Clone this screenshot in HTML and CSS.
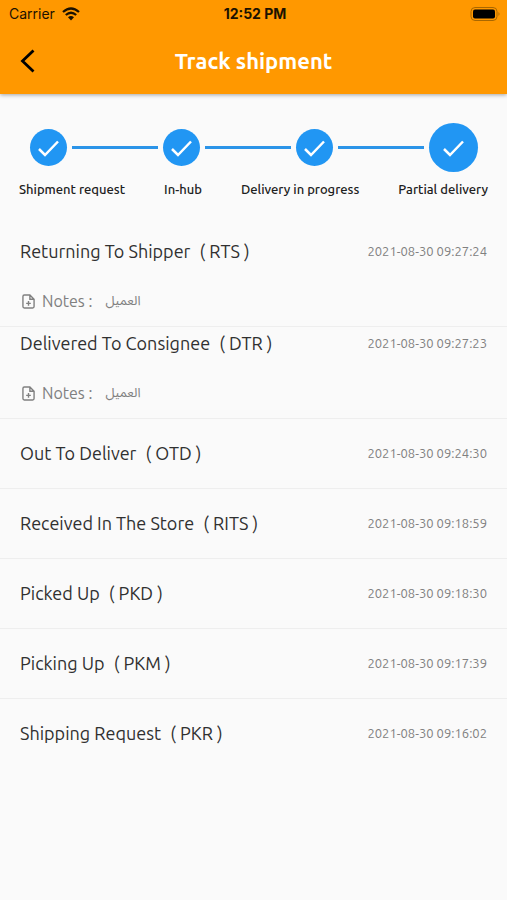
FILE: index.html
```html
<!DOCTYPE html>
<html lang="en">
<head>
<meta charset="utf-8">
<meta name="viewport" content="width=device-width, initial-scale=1">
<title>Track shipment</title>
<link rel="stylesheet" href="styles.css">
</head>
<body>
<svg class="defs" aria-hidden="true">
  <symbol id="check" viewBox="0 0 24 24"><path d="M2 13 8 19 21 5.500" fill="none" stroke="currentColor" stroke-width="2.500"/></symbol>
  <symbol id="note" viewBox="0 0 14 16"><path d="M8.500 1H2.500Q1 1 1 2.500V13.500Q1 15 2.500 15H11.500Q13 15 13 13.500V5.500ZM8.500 1V5.500H13M7 7.500V12.500M4.500 10H9.500" fill="none" stroke="currentColor" stroke-width="1.500"/></symbol>
</svg>
<header class="header">
  <div class="status">
    <div class="carrier">
      <span>Carrier</span>
      <svg class="wifi" viewBox="0 0 18 14" aria-label="Wi-Fi"><path d="M1 5Q9-2 17 5M3.800 8Q9 3.500 14.200 8" fill="none" stroke="#1c1200" stroke-width="2.300"/><path d="M6 10.200Q9 7.600 12 10.200L9 13.500Z" fill="#1c1200"/></svg>
    </div>
    <span class="clock">12:52 PM</span>
    <svg class="battery" viewBox="0 0 31 14" aria-label="Battery full"><rect x="1" y="0.500" width="26" height="13" rx="4" fill="none" stroke="#a96700"/><rect x="3" y="2.500" width="22" height="9" rx="2" fill="#000"/><path d="M28.500 5v4q2-2 0-4" fill="#a96700"/></svg>
  </div>
  <div class="bar">
    <button class="back" type="button" aria-label="Back"><svg viewBox="0 0 16 24"><path d="M13.500 1.500 2.500 12 13.500 22.500" fill="none" stroke="#000" stroke-width="2.800"/></svg></button>
    <h1>Track shipment</h1>
  </div>
</header>
<main>
  <section class="stepper" aria-label="Progress">
    <div class="steps">
      <span class="step"><svg><use href="#check"/></svg></span>
      <span class="line"></span>
      <span class="step"><svg><use href="#check"/></svg></span>
      <span class="line"></span>
      <span class="step"><svg><use href="#check"/></svg></span>
      <span class="line"></span>
      <span class="step current"><svg><use href="#check"/></svg></span>
    </div>
    <div class="labels"><span>Shipment request</span><span>In-hub</span><span>Delivery in progress</span><span>Partial delivery</span></div>
  </section>
  <ul class="events">
    <li class="noted">
      <div class="event"><h2>Returning To Shipper <span>( RTS )</span></h2><time>2021-08-30 09:27:24</time></div>
      <p class="note"><svg><use href="#note"/></svg><span>Notes :</span><span class="arabic" lang="ar" dir="rtl">العميل</span></p>
    </li>
    <li class="noted">
      <div class="event"><h2>Delivered To Consignee <span>( DTR )</span></h2><time>2021-08-30 09:27:23</time></div>
      <p class="note"><svg><use href="#note"/></svg><span>Notes :</span><span class="arabic" lang="ar" dir="rtl">العميل</span></p>
    </li>
    <li><div class="event"><h2>Out To Deliver <span>( OTD )</span></h2><time>2021-08-30 09:24:30</time></div></li>
    <li><div class="event"><h2>Received In The Store <span>( RITS )</span></h2><time>2021-08-30 09:18:59</time></div></li>
    <li><div class="event"><h2>Picked Up <span>( PKD )</span></h2><time>2021-08-30 09:18:30</time></div></li>
    <li><div class="event"><h2>Picking Up <span>( PKM )</span></h2><time>2021-08-30 09:17:39</time></div></li>
    <li><div class="event"><h2>Shipping Request <span>( PKR )</span></h2><time>2021-08-30 09:16:02</time></div></li>
  </ul>
</main>
</body>
</html>
```
FILE: styles.css
```css
* { box-sizing: border-box; }
body {
  margin: 0;
  background: #fafafa;
  color: #303030;
  font-family: Ubuntu, "Noto Sans", sans-serif;
}
h1, h2, p, ul { margin: 0; padding: 0; }
.defs { position: absolute; width: 0; height: 0; }

.header {
  background: #ff9800;
  box-shadow: 0 1px 4px rgba(0, 0, 0, 0.35);
}
.status {
  display: grid;
  grid-template-columns: 1fr auto 1fr;
  align-items: center;
  height: 27px;
  padding: 0 6px 0 9px;
  color: #1c1200;
  font: 14px/20px Inter, sans-serif;
}
.carrier { display: flex; align-items: center; gap: 7px; }
.wifi { width: 18px; height: 14px; }
.clock { font-weight: 700; }
.battery { width: 31px; height: 14px; justify-self: end; }
.bar {
  display: grid;
  grid-template-columns: 56px 1fr 56px;
  align-items: center;
  height: 67px;
}
.back {
  display: flex;
  align-items: center;
  height: 48px;
  padding: 0 0 0 20px;
  border: 0;
  background: none;
}
.back svg { width: 16px; height: 24px; }
h1 {
  color: #fff;
  font-size: 22px;
  font-weight: 600;
  line-height: 26px;
  text-align: center;
}

.stepper { padding: 29px 19px 35px; }
.steps {
  display: flex;
  align-items: center;
  gap: 5px;
  padding: 0 10px 0 11px;
}
.step {
  display: flex;
  align-items: center;
  justify-content: center;
  width: 37px;
  height: 37px;
  border-radius: 50%;
  background: #2196f3;
  color: #fff;
}
.step svg { width: 24px; height: 24px; }
.current { width: 49px; height: 49px; }
.line { flex: 1; height: 3px; background: #2b94e8; }
.labels {
  display: flex;
  justify-content: space-between;
  margin-top: 7px;
  margin-bottom: 1px;
  color: #202020;
  font-size: 13px;
  font-weight: 500;
  line-height: 20px;
  white-space: nowrap;
}

.events { list-style: none; }
.events li { padding: 22px 20px 23px; border-bottom: 1px solid #eeeeee; }
.events li:last-child { border-bottom: 0; }
.events .noted { padding: 4px 20px 13px; }
.event {
  display: flex;
  align-items: center;
  justify-content: space-between;
}
h2 { font-size: 18px; font-weight: 400; line-height: 24px; }
h2 span { margin-left: 5px; }
time { color: #808080; font-size: 13px; line-height: 24px; }
.note {
  display: flex;
  align-items: center;
  margin-top: 26px;
  padding-left: 2px;
  color: #808080;
  font-size: 16px;
  line-height: 24px;
}
.note svg { width: 13px; height: 15px; margin-right: 7px; }
.arabic { margin-left: 13px; font-family: "Noto Sans Arabic", "DejaVu Sans", sans-serif; font-size: 13px; }
```
